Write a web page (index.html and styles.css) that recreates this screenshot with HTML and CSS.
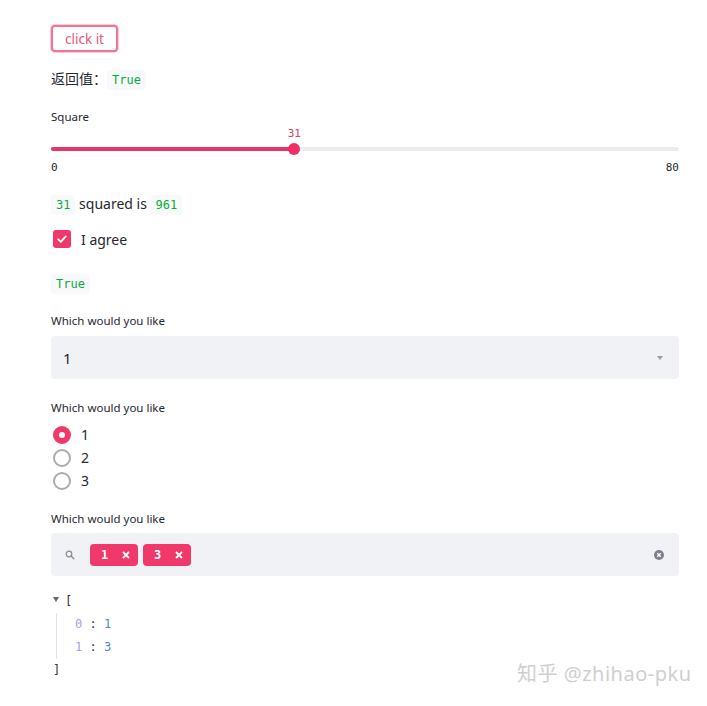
FILE: index.html
```html
<!DOCTYPE html>
<html lang="zh">
<head>
  <meta charset="UTF-8">
  <meta name="viewport" content="width=device-width, initial-scale=1">
  <title>streamlit demo</title>
  <link rel="stylesheet" href="styles.css">
</head>
<body>
  <div class="main">
    <button class="btn">click it</button>

    <p class="line ret">返回值：<code>True</code></p>

    <div class="slider">
      <div class="label">Square</div>
      <div class="slider-body">
        <div class="slider-value" style="left: 38.75%">31</div>
        <div class="track">
          <div class="fill" style="width: 38.75%"></div>
          <div class="thumb" style="left: 38.75%"></div>
        </div>
        <div class="minmax"><span>0</span><span>80</span></div>
      </div>
    </div>

    <p class="line squared"><code>31</code> squared is <code>961</code></p>

    <label class="check">
      <span class="box">
        <svg width="12" height="12" viewBox="0 0 12 12"><path d="M2.2 6.3 L4.8 8.8 L9.8 3.4" fill="none" stroke="#fff" stroke-width="1.8" stroke-linecap="round" stroke-linejoin="round"/></svg>
      </span>
      I agree
    </label>

    <p class="line agree"><code>True</code></p>

    <div class="label sel-label">Which would you like</div>
    <div class="select">
      <span>1</span>
      <span class="caret"></span>
    </div>

    <div class="label radio-label">Which would you like</div>
    <div class="radios">
      <div class="radio on"><span class="dot"></span>1</div>
      <div class="radio"><span class="dot"></span>2</div>
      <div class="radio"><span class="dot"></span>3</div>
    </div>

    <div class="label multi-label">Which would you like</div>
    <div class="multi">
      <svg class="search" width="10" height="10" viewBox="0 0 10 10"><circle cx="4" cy="4" r="2.8" fill="none" stroke="#8a8d96" stroke-width="1.3"/><path d="M6.1 6.1 L8.8 8.8" stroke="#8a8d96" stroke-width="1.4" stroke-linecap="round"/></svg>
      <span class="tag">1<svg class="x" width="8" height="8" viewBox="0 0 8 8"><path d="M1 1 L7 7 M7 1 L1 7" stroke="#fff" stroke-width="1.8"/></svg></span>
      <span class="tag">3<svg class="x" width="8" height="8" viewBox="0 0 8 8"><path d="M1 1 L7 7 M7 1 L1 7" stroke="#fff" stroke-width="1.8"/></svg></span>
      <span class="clear">
        <svg width="10" height="10" viewBox="0 0 10 10"><circle cx="5" cy="5" r="5" fill="#7d808a"/><path d="M3.3 3.3 L6.7 6.7 M6.7 3.3 L3.3 6.7" stroke="#fff" stroke-width="1.3"/></svg>
      </span>
    </div>

    <div class="json">
      <div class="jrow open"><span class="tri"></span>[</div>
      <div class="jbody">
        <div class="jrow"><span class="k">0</span> : <span class="v">1</span></div>
        <div class="jrow"><span class="k">1</span> : <span class="v">3</span></div>
      </div>
      <div class="jrow close">]</div>
    </div>
  </div>

  <div class="mark">知乎 @zhihao-pku</div>
</body>
</html>
```

FILE: styles.css
```css
body {
  margin: 0;
  font-family: "Noto Sans", "Noto Sans CJK SC", sans-serif;
  font-size: 14px;
  color: #262730;
  background: #fff;
}
.main {
  width: 628px;
  padding: 25px 0 0 51px;
}

code {
  font-family: "DejaVu Sans Mono", monospace;
  font-size: 12px;
  color: #09ab3b;
  background: #f8f9fa;
  padding: 3px 5px;
  border-radius: 3px;
}

.btn {
  display: block;
  height: 27px;
  width: 67px;
  padding: 0;
  font-family: inherit;
  font-size: 13.5px;
  color: #e45a7c;
  background: #fff;
  border: 2px solid #ef7694;
  border-radius: 4px;
  box-shadow: 0 0 0 1px rgba(246, 51, 102, 0.25);
}

.line {
  margin: 0;
  line-height: 24px;
}
.ret { margin-top: 15px; }
.squared { margin-top: 16px; }
.agree { margin-top: 20px; }

.label {
  font-size: 11.5px;
  line-height: 16px;
  color: #262730;
}

.slider { margin-top: 17px; }
.slider-body {
  position: relative;
  padding-top: 17px;
}
.slider-value {
  position: absolute;
  top: 1px;
  transform: translateX(-50%);
  font-family: "DejaVu Sans Mono", monospace;
  font-size: 11px;
  line-height: 16px;
  color: #e0406c;
}
.track {
  position: relative;
  height: 4px;
  margin: 5px 0;
  background: #ebecf0;
  border-radius: 2px;
}
.fill {
  height: 4px;
  background: #e0386a;
  border-radius: 2px;
}
.thumb {
  position: absolute;
  top: -4px;
  width: 12px;
  height: 12px;
  margin-left: -6px;
  border-radius: 50%;
  background: #ef2f63;
}
.minmax {
  display: flex;
  justify-content: space-between;
  margin-top: 9px;
  font-family: "DejaVu Sans Mono", monospace;
  font-size: 11px;
  line-height: 16px;
  color: #262730;
}

.check {
  display: flex;
  align-items: center;
  gap: 10px;
  height: 24px;
  margin-top: 10px;
  padding-left: 2px;
}
.box {
  display: flex;
  align-items: center;
  justify-content: center;
  width: 18px;
  height: 18px;
  border-radius: 3px;
  background: #f0386b;
}

.sel-label { margin-top: 17px; }
.select {
  display: flex;
  align-items: center;
  justify-content: space-between;
  height: 43px;
  margin-top: 7px;
  padding: 0 16px 0 12px;
  background: #f0f2f6;
  border-radius: 4px;
  font-size: 15px;
}
.caret {
  width: 0;
  height: 0;
  border-left: 3.5px solid transparent;
  border-right: 3.5px solid transparent;
  border-top: 4px solid #9a9ca4;
}

.radio-label { margin-top: 21px; }
.radios { margin-top: 7px; }
.radio {
  display: flex;
  align-items: center;
  gap: 10px;
  height: 23px;
  padding-left: 2px;
}
.dot {
  box-sizing: border-box;
  width: 18px;
  height: 18px;
  border-radius: 50%;
  border: 2px solid #a9abb2;
}
.radio.on .dot {
  border: 6px solid #f0386b;
  background: #fff;
}

.multi-label { margin-top: 19px; }
.multi {
  display: flex;
  align-items: center;
  gap: 5px;
  height: 43px;
  margin-top: 6px;
  padding: 0 15px 0 14px;
  background: #f0f2f6;
  border-radius: 4px;
}
.search { margin-right: 10px; }
.tag {
  display: flex;
  align-items: center;
  justify-content: space-between;
  box-sizing: border-box;
  width: 48px;
  height: 22px;
  padding: 0 8px 0 11px;
  background: #f0386b;
  color: #fff;
  border-radius: 4px;
  font-family: "DejaVu Sans Mono", monospace;
  font-size: 12px;
  font-weight: bold;
}
.clear {
  display: flex;
  margin-left: auto;
}

.json {
  margin-top: 14px;
  font-family: "DejaVu Sans Mono", monospace;
  font-size: 12px;
  color: #333;
}
.jrow {
  position: relative;
  line-height: 23px;
}
.open { padding-left: 14px; }
.close { padding-left: 2px; }
.tri {
  position: absolute;
  left: 2px;
  top: 7px;
  width: 0;
  height: 0;
  border-left: 3.5px solid transparent;
  border-right: 3.5px solid transparent;
  border-top: 5px solid #666;
}
.jbody {
  margin-left: 5px;
  padding-left: 18px;
  border-left: 1px solid #e2e2e2;
}
.k { color: #a3a4d6; }
.v { color: #4c86cc; }

.mark {
  position: absolute;
  left: 517px;
  top: 658px;
  font-size: 20px;
  color: #cfcfcf;
  letter-spacing: 0.5px;
}
```
